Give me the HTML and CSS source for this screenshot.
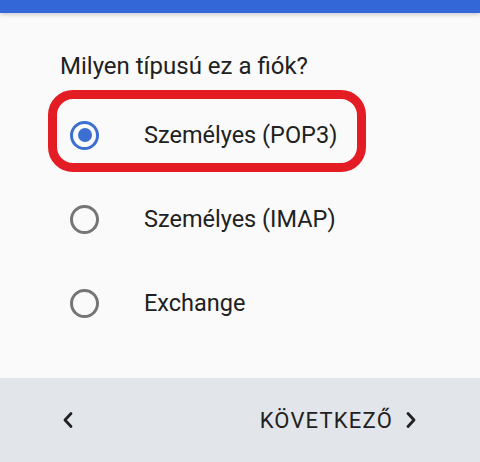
FILE: index.html
```html
<!DOCTYPE html>
<html lang="hu">
<head>
<meta charset="utf-8">
<link rel="stylesheet" href="styles.css">
</head>
<body>
<div class="screen">
  <div class="appbar"></div>
  <main class="content">
    <h1 class="title">Milyen típusú ez a fiók?</h1>
    <ul class="options">
      <li class="option option--highlight">
        <span class="radio radio--checked"><span class="dot"></span></span>
        <span class="label">Személyes (POP3)</span>
      </li>
      <li class="option">
        <span class="radio"></span>
        <span class="label">Személyes (IMAP)</span>
      </li>
      <li class="option">
        <span class="radio"></span>
        <span class="label">Exchange</span>
      </li>
    </ul>
  </main>
  <footer class="navbar">
    <button class="navbtn navbtn--back" aria-label="Vissza">
      <svg width="13" height="18" viewBox="0 0 13 18"><path d="M10 2.5 L4 9 L10 15.5" fill="none" stroke="#222" stroke-width="2.8" stroke-linecap="round" stroke-linejoin="round"/></svg>
    </button>
    <button class="navbtn navbtn--next">
      <span class="navtext">KÖVETKEZŐ</span>
      <svg width="13" height="18" viewBox="0 0 13 18"><path d="M3 2.5 L9 9 L3 15.5" fill="none" stroke="#222" stroke-width="2.8" stroke-linecap="round" stroke-linejoin="round"/></svg>
    </button>
  </footer>
</div>
</body>
</html>
```

FILE: styles.css
```css
*, *::before, *::after { box-sizing: border-box; }
html, body { margin: 0; padding: 0; }
body {
  background: #fafafa;
  font-family: Roboto, "Noto Sans", "Liberation Sans", sans-serif;
  color: #212121;
}
.screen {
  width: 480px;
  height: 462px;
  display: flex;
  flex-direction: column;
  overflow: hidden;
}
.appbar {
  height: 13px;
  background: #3366d6;
  box-shadow: 0 2px 4px rgba(0,0,0,0.18);
  flex: none;
}
.content {
  flex: 1;
  padding: 39px 0 0 60px;
}
.title {
  margin: 0;
  font-size: 24px;
  font-weight: 400;
  line-height: 28px;
  color: #212121;
}
.options {
  list-style: none;
  margin: 13px 0 0;
  padding: 0;
}
.option {
  position: relative;
  height: 84px;
  display: flex;
  align-items: center;
  padding-left: 10px;
}
.option--highlight::after {
  content: "";
  position: absolute;
  left: -12px;
  top: -3px;
  width: 318px;
  height: 82px;
  border: 9px solid #e41d25;
  border-radius: 25px;
}
.radio {
  width: 29px;
  height: 29px;
  border-radius: 50%;
  border: 3px solid #757575;
  display: flex;
  align-items: center;
  justify-content: center;
  flex: none;
}
.radio--checked { border-color: #3b6fd2; }
.dot {
  width: 14px;
  height: 14px;
  border-radius: 50%;
  background: #3b6fd2;
}
.label {
  margin-left: 45px;
  font-size: 23.5px;
  line-height: 28px;
  color: #212121;
}
.navbar {
  flex: none;
  height: 84px;
  background: #e2e5e9;
  display: flex;
  align-items: center;
  justify-content: space-between;
  padding: 0 62px 0 61px;
}
.navbtn {
  background: none;
  border: 0;
  padding: 0;
  display: flex;
  align-items: center;
  font-family: inherit;
  color: #212121;
}
.navtext {
  font-size: 22px;
  letter-spacing: 1.2px;
  margin-right: 12px;
}
```
